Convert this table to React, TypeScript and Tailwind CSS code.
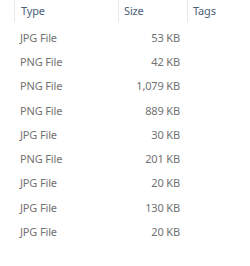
const rows = [
  { type: 'JPG File', size: '53 KB' },
  { type: 'PNG File', size: '42 KB' },
  { type: 'PNG File', size: '1,079 KB' },
  { type: 'PNG File', size: '889 KB' },
  { type: 'JPG File', size: '30 KB' },
  { type: 'PNG File', size: '201 KB' },
  { type: 'JPG File', size: '20 KB' },
  { type: 'JPG File', size: '130 KB' },
  { type: 'JPG File', size: '20 KB' },
];

export default function App() {
  return (
    <div className="w-[250px] h-[266px] bg-white overflow-hidden text-[11px] tracking-[-0.15px] font-['Noto_Sans',sans-serif]">
      {/* Column headers */}
      <div className="flex h-[25px] pl-[14px]">
        <div className="w-[104px] h-[22px] border-l border-[#e8e8e8] pl-[6px] flex items-center text-[#4c607a]">Type</div>
        <div className="w-[69px] h-[22px] border-l border-[#e8e8e8] pl-[5px] flex items-center text-[#4c607a]">Size</div>
        <div className="flex-1 h-[22px] border-l border-[#e8e8e8] pl-[5px] flex items-center text-[#4c607a]">Tags</div>
      </div>

      {/* Rows */}
      <div className="flex flex-col pt-[1px]">
        {rows.map((r, i) => (
          <div key={i} className="flex h-[24.25px] items-center pl-[20px] text-[#727272]">
            <span className="w-[110px]">{r.type}</span>
            <span className="w-[50px] text-right">{r.size}</span>
          </div>
        ))}
      </div>
    </div>
  );
}
